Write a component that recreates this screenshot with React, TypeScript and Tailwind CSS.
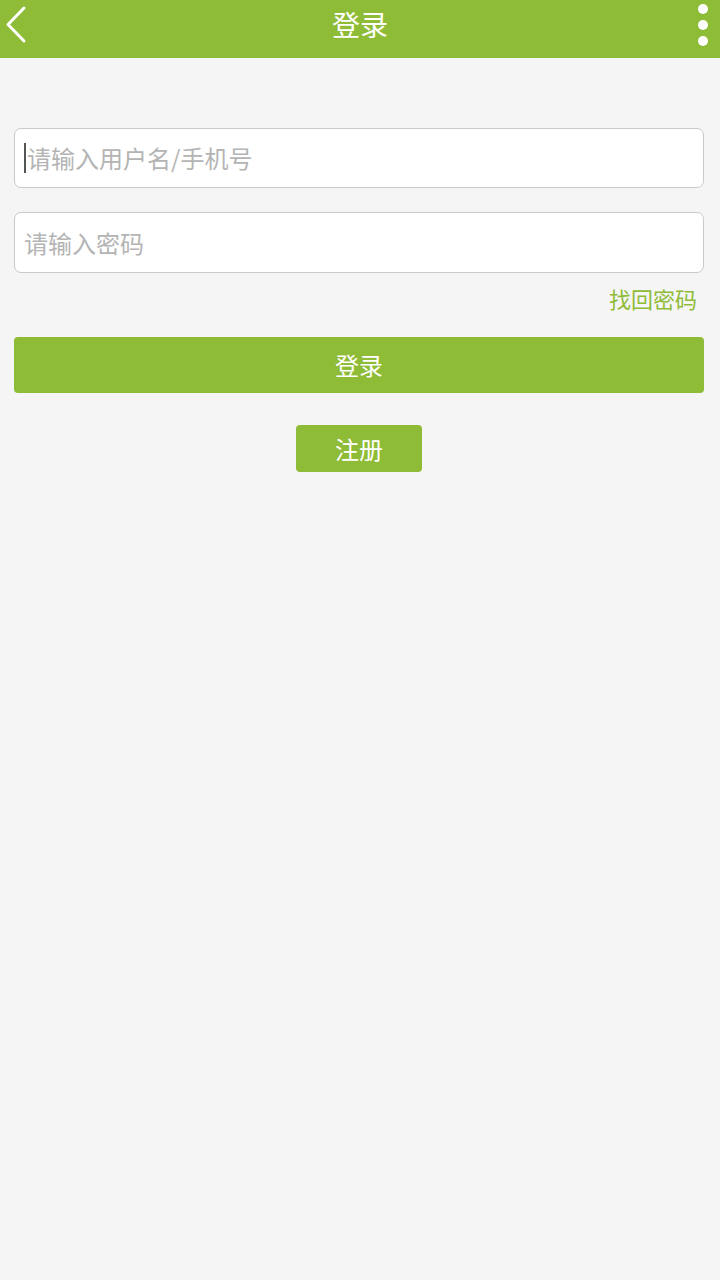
export default function App() {
  const font = { fontFamily: '"Noto Sans CJK SC", "Noto Sans", sans-serif' }

  return (
    <div className="min-h-[1280px] w-[720px] bg-[#f5f5f5]" style={font}>
      <div className="relative flex h-[58px] items-center justify-center bg-[#8fbc37] pb-[10px]">
        <svg className="absolute left-[4px] top-[5px]" width="26" height="40" viewBox="0 0 26 40">
          <path d="M20 3 L4 19.5 L20 36" fill="none" stroke="white" strokeWidth="3" strokeLinecap="round" strokeLinejoin="round" />
        </svg>
        <span className="text-[28px] leading-none text-white">登录</span>
        <div className="absolute right-[12px] top-[4px] flex flex-col gap-[6px]">
          <span className="block h-[10px] w-[10px] rounded-full bg-white" />
          <span className="block h-[10px] w-[10px] rounded-full bg-white" />
          <span className="block h-[10px] w-[10px] rounded-full bg-white" />
        </div>
      </div>

      <div className="pl-[14px] pr-[16px] pt-[70px]">
        <div className="relative flex h-[60px] items-center rounded-[7px] border border-[#c9c9c9] bg-white px-[9px]">
          <span className="mr-[1px] h-[30px] w-[2px] bg-[#555]" />
          <input
            className="w-full bg-transparent text-[24px] text-[#333] outline-none placeholder:text-[#b4b4b4]"
            placeholder="请输入用户名/手机号"
            style={font}
          />
        </div>
        <div className="mt-[24px] flex h-[61px] items-center rounded-[7px] border border-[#c9c9c9] bg-white px-[9px]">
          <input
            type="password"
            className="w-full bg-transparent text-[24px] text-[#333] outline-none placeholder:text-[#b4b4b4]"
            placeholder="请输入密码"
            style={font}
          />
        </div>
        <div className="flex justify-end pr-[7px] pt-[10px]">
          <span className="text-[22px] leading-[30px] text-[#8fbc37]">找回密码</span>
        </div>
        <button
          className="mt-[24px] flex h-[56px] w-full items-center justify-center rounded-[4px] bg-[#8fbc37] text-[24px] text-white"
          style={font}
        >
          登录
        </button>
        <div className="mt-[32px] flex justify-center">
          <button
            className="flex h-[47px] w-[126px] items-center justify-center rounded-[4px] bg-[#8fbc37] text-[24px] text-white"
            style={font}
          >
            注册
          </button>
        </div>
      </div>
    </div>
  )
}
